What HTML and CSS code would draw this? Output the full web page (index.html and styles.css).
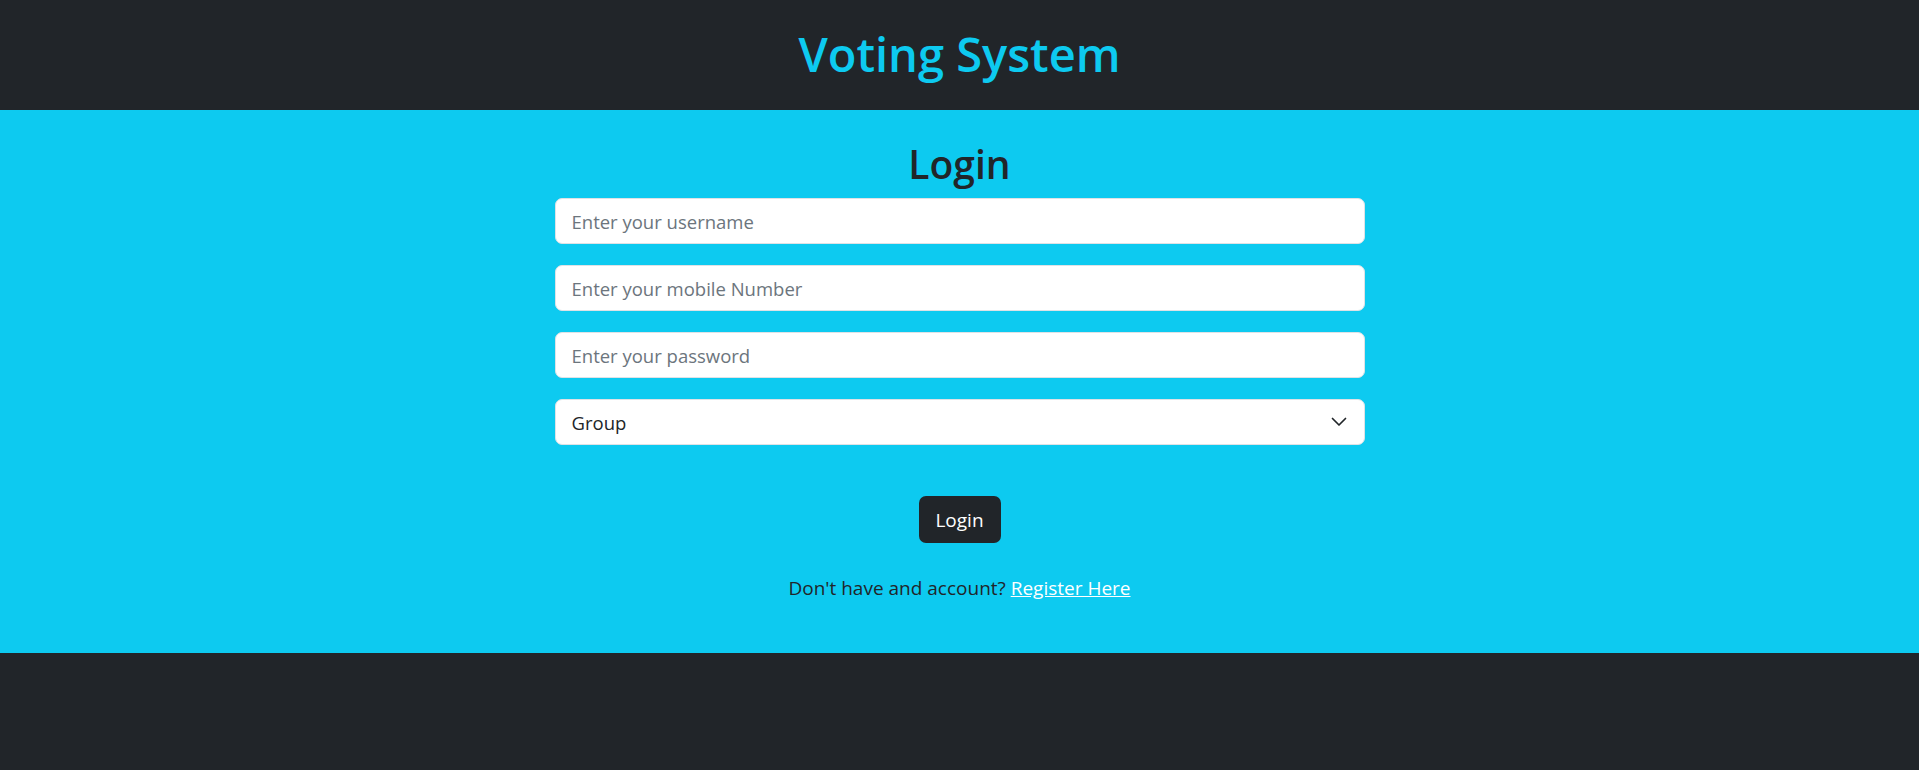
FILE: index.html
```html
<!DOCTYPE html>
<html lang="en">
<head>
<meta charset="utf-8">
<title>Voting System</title>
<link rel="stylesheet" href="styles.css">
</head>
<body>
<header class="topbar">
  <h1 class="brand">Voting System</h1>
</header>
<main class="panel">
  <h2 class="panel-title">Login</h2>
  <form class="login-form">
    <input class="field" type="text" placeholder="Enter your username">
    <input class="field" type="text" placeholder="Enter your mobile Number">
    <input class="field" type="password" placeholder="Enter your password">
    <div class="select-wrap">
      <select class="field select">
        <option>Group</option>
        <option>Voter</option>
        <option>Candidate</option>
      </select>
      <svg class="chevron" width="16" height="10" viewBox="0 0 16 10"><path d="M1.5 1.5 L8 8 L14.5 1.5" fill="none" stroke="#212529" stroke-width="1.7" stroke-linecap="round" stroke-linejoin="round"/></svg>
    </div>
    <button class="btn" type="button">Login</button>
  </form>
  <p class="note">Don't have and account? <a class="link" href="#">Register Here</a></p>
</main>
</body>
</html>
```
FILE: styles.css
```css
html, body {
  margin: 0;
  padding: 0;
}
body {
  background: #212529;
  font-family: "Open Sans", "Noto Sans", sans-serif;
  color: #212529;
  min-height: 770px;
}
.topbar {
  height: 110px;
  display: flex;
  align-items: center;
  justify-content: center;
  background: #212529;
}
.brand {
  margin: 0;
  font-size: 47px;
  font-weight: 600;
  color: #0dcaf0;
  line-height: 1.2;
  padding-bottom: 2px;
}
.panel {
  background: #0dcaf0;
  height: 543px;
  box-sizing: border-box;
  padding-top: 30px;
  display: flex;
  flex-direction: column;
  align-items: center;
}
.panel-title {
  margin: 0 0 10px;
  font-size: 39px;
  font-weight: 600;
  line-height: 48px;
  color: #212529;
}
.login-form {
  width: 810px;
  display: flex;
  flex-direction: column;
  align-items: center;
}
.field {
  width: 100%;
  height: 46px;
  box-sizing: border-box;
  border: 1px solid #dee2e6;
  border-radius: 7px;
  background: #fff;
  padding: 0 16px;
  font-family: inherit;
  font-size: 18.5px;
  color: #212529;
  margin: 0 0 21px;
  outline: none;
}
.field::placeholder {
  color: #6c757d;
}
.select-wrap {
  position: relative;
  width: 100%;
}
.select {
  appearance: none;
  -webkit-appearance: none;
  margin: 0;
}
.chevron {
  position: absolute;
  right: 18px;
  top: 18px;
}
.btn {
  margin-top: 51px;
  width: 82px;
  height: 47px;
  border: none;
  border-radius: 7px;
  background: #212529;
  color: #fff;
  font-family: inherit;
  font-size: 19px;
  padding: 0;
}
.note {
  margin: 31px 0 0;
  font-size: 19px;
  line-height: 28px;
  color: #212529;
}
.link {
  color: #fff;
}
```
